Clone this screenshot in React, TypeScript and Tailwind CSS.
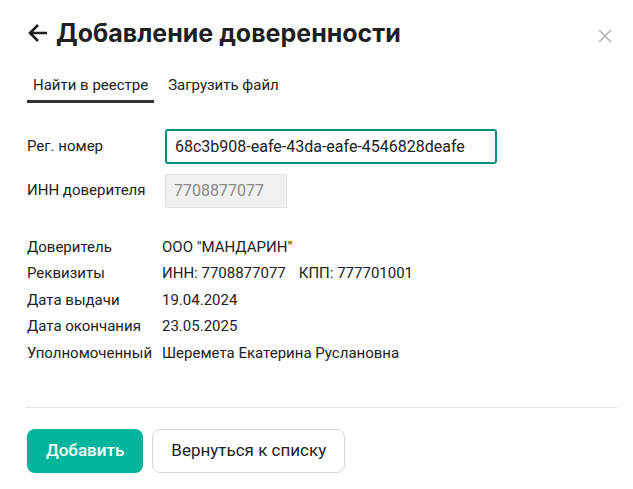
import { useState } from 'react'

const details = [
  { label: 'Доверитель', value: ['ООО "МАНДАРИН"'] },
  { label: 'Реквизиты', value: ['ИНН: 7708877077', 'КПП: 777701001'] },
  { label: 'Дата выдачи', value: ['19.04.2024'] },
  { label: 'Дата окончания', value: ['23.05.2025'] },
  { label: 'Уполномоченный', value: ['Шеремета Екатерина Руслановна'] },
]

export default function App() {
  const [tab, setTab] = useState('registry')
  const [regNumber, setRegNumber] = useState('68c3b908-eafe-43da-eafe-4546828deafe')

  return (
    <div className="w-[633px] h-[489px] bg-white text-[#222] font-['Roboto',sans-serif] relative">
      <button className="absolute right-[20px] top-[28px] text-[#b0b0b0]">
        <svg width="16" height="16" viewBox="0 0 16 16" stroke="currentColor" strokeWidth="1.5">
          <path d="M2 2l12 12M14 2L2 14" />
        </svg>
      </button>

      <div className="px-[27px] pt-[16px]">
        <h1 className="flex items-center gap-[7px] font-['Inter',sans-serif] text-[25px] font-bold leading-[34px] text-[#1f1f1f]">
          <svg width="22" height="22" viewBox="0 0 22 22" fill="none" stroke="currentColor" strokeWidth="2.6">
            <path d="M20 11H3M11 3l-8 8 8 8" />
          </svg>
          Добавление доверенности
        </h1>

        <div className="flex mt-[24px] text-[15px]">
          <button
            onClick={() => setTab('registry')}
            className={'px-[6px] pb-[3px] border-b-[3px] ' + (tab === 'registry' ? 'border-[#333]' : 'border-transparent')}
          >
            Найти в реестре
          </button>
          <button
            onClick={() => setTab('file')}
            className={'ml-[8px] px-[6px] pb-[3px] border-b-[3px] ' + (tab === 'file' ? 'border-[#333]' : 'border-transparent')}
          >
            Загрузить файл
          </button>
        </div>

        <div className="mt-[26px] flex flex-col gap-[10px] text-[15px]">
          <div className="flex items-center">
            <label className="w-[138px]">Рег. номер</label>
            <input
              value={regNumber}
              onChange={(e) => setRegNumber(e.target.value)}
              className="w-[332px] h-[35px] px-[8px] border-2 border-[#00927d] rounded-[3px] outline-none text-[16px] text-[#222]"
            />
          </div>
          <div className="flex items-center">
            <label className="w-[138px]">ИНН доверителя</label>
            <input
              disabled
              value="7708877077"
              className="w-[122px] h-[34px] px-[8px] bg-[#f0f0f0] border border-[#e2e2e2] rounded-[2px] text-[16px] text-[#8a8a8a]"
            />
          </div>
        </div>

        <div className="mt-[26px] flex flex-col text-[15px] leading-[26.5px]">
          {details.map((d) => (
            <div key={d.label} className="flex">
              <span className="w-[135px]">{d.label}</span>
              <span className="flex gap-[13px]">
                {d.value.map((v) => (
                  <span key={v}>{v}</span>
                ))}
              </span>
            </div>
          ))}
        </div>

        <div className="mt-[41px] border-t border-[#e4e4e4] -mx-[1px] mr-[-11px]" />

        <div className="flex gap-[9px] mt-[21px]">
          <button className="h-[44px] px-[19px] bg-[#00b59b] text-white text-[17px] font-medium rounded-[8px]">
            Добавить
          </button>
          <button className="h-[44px] px-[18px] border border-[#d6d6d6] text-[17px] rounded-[8px]">
            Вернуться к списку
          </button>
        </div>
      </div>
    </div>
  )
}
